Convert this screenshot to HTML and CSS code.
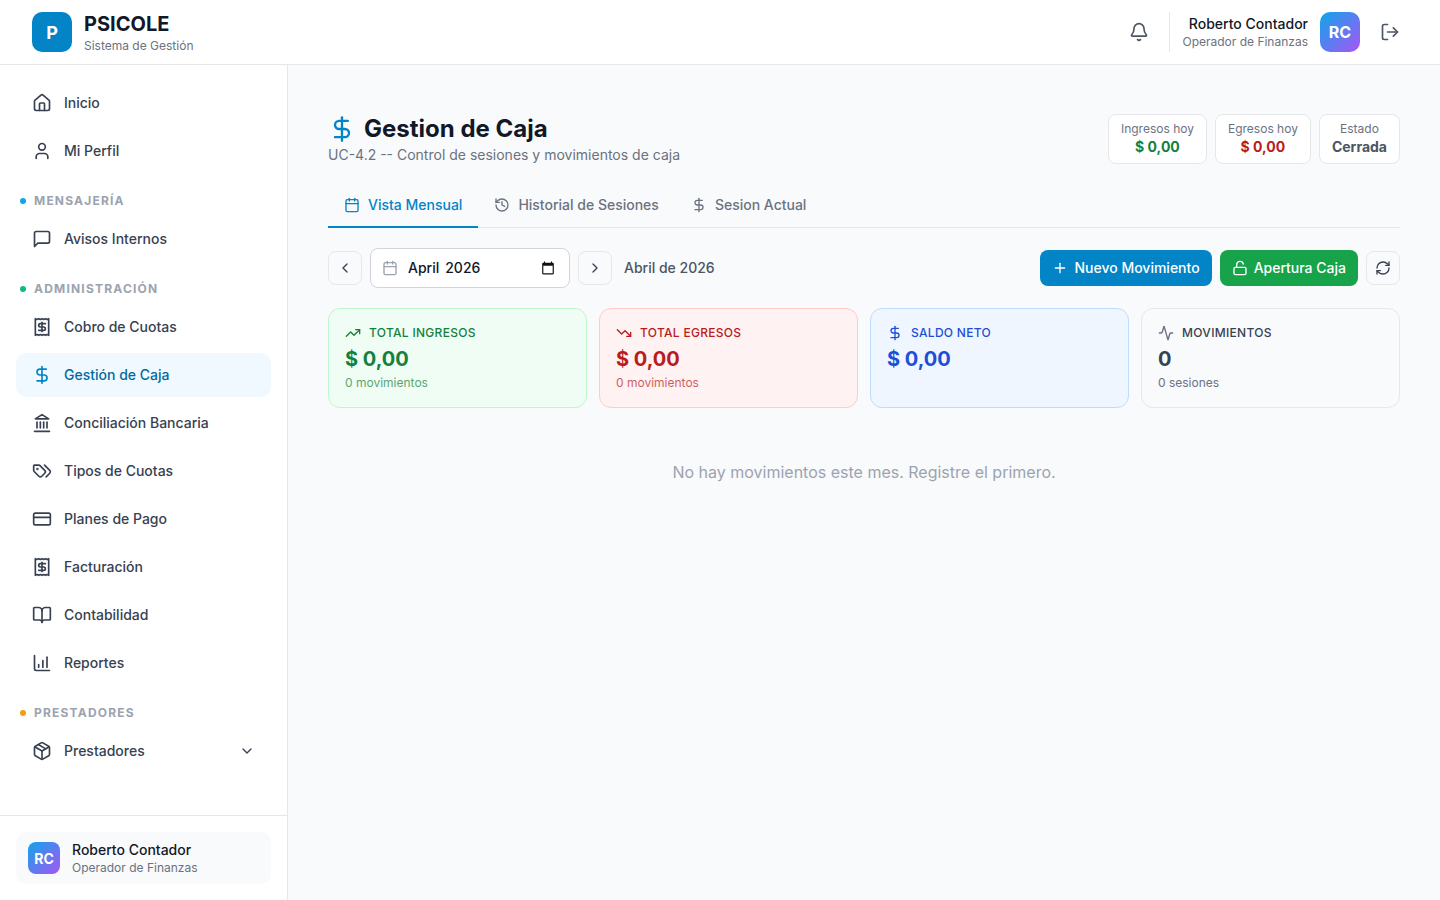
FILE: index.html
```html
<!DOCTYPE html>
<html lang="es">
  <head>
    <meta charset="UTF-8" />
    <meta name="viewport" content="width=device-width, initial-scale=1.0" />
    <title>PSICOLE - Gestion de Caja</title>
    <link rel="stylesheet" href="styles.css" />
  </head>
  <body>
    <svg class="icon-defs" width="0" height="0" aria-hidden="true">
      <defs>
        <symbol id="i-dollar" viewBox="0 0 24 24"><path d="M12 2v20"/><path d="M17 5H9.5a3.5 3.5 0 0 0 0 7h5a3.5 3.5 0 0 1 0 7H6"/></symbol>
        <symbol id="i-home" viewBox="0 0 24 24"><path d="M15 21v-8a1 1 0 0 0-1-1h-4a1 1 0 0 0-1 1v8"/><path d="M3 10a2 2 0 0 1 .709-1.528l7-5.999a2 2 0 0 1 2.582 0l7 5.999A2 2 0 0 1 21 10v9a2 2 0 0 1-2 2H5a2 2 0 0 1-2-2z"/></symbol>
        <symbol id="i-user" viewBox="0 0 24 24"><path d="M19 21v-2a4 4 0 0 0-4-4H9a4 4 0 0 0-4 4v2"/><circle cx="12" cy="7" r="4"/></symbol>
        <symbol id="i-chat" viewBox="0 0 24 24"><path d="M21 15a2 2 0 0 1-2 2H7l-4 4V5a2 2 0 0 1 2-2h14a2 2 0 0 1 2 2z"/></symbol>
        <symbol id="i-receipt" viewBox="0 0 24 24"><path d="M4 2v20l2-1 2 1 2-1 2 1 2-1 2 1 2-1 2 1V2l-2 1-2-1-2 1-2-1-2 1-2-1-2 1Z"/><path d="M16 8h-6a2 2 0 1 0 0 4h4a2 2 0 1 1 0 4H8"/><path d="M12 17.5v-11"/></symbol>
        <symbol id="i-bank" viewBox="0 0 24 24"><line x1="3" x2="21" y1="22" y2="22"/><line x1="6" x2="6" y1="18" y2="11"/><line x1="10" x2="10" y1="18" y2="11"/><line x1="14" x2="14" y1="18" y2="11"/><line x1="18" x2="18" y1="18" y2="11"/><polygon points="12 2 20 7 4 7"/></symbol>
        <symbol id="i-tags" viewBox="0 0 24 24"><path d="m15 5 6.3 6.3a2.4 2.4 0 0 1 0 3.4L17 19"/><path d="M9.586 5.586A2 2 0 0 0 8.172 5H3a1 1 0 0 0-1 1v5.172a2 2 0 0 0 .586 1.414L8.29 18.29a2.426 2.426 0 0 0 3.42 0l3.58-3.58a2.426 2.426 0 0 0 0-3.42z"/><circle cx="6.5" cy="9.5" r=".5" fill="currentColor"/></symbol>
        <symbol id="i-card" viewBox="0 0 24 24"><rect width="20" height="14" x="2" y="5" rx="2"/><line x1="2" x2="22" y1="10" y2="10"/></symbol>
        <symbol id="i-book" viewBox="0 0 24 24"><path d="M12 7v14"/><path d="M3 18a1 1 0 0 1-1-1V4a1 1 0 0 1 1-1h5a4 4 0 0 1 4 4 4 4 0 0 1 4-4h5a1 1 0 0 1 1 1v13a1 1 0 0 1-1 1h-6a3 3 0 0 0-3 3 3 3 0 0 0-3-3z"/></symbol>
        <symbol id="i-chart" viewBox="0 0 24 24"><path d="M3 3v16a2 2 0 0 0 2 2h16"/><path d="M8 17v-3"/><path d="M13 17V9"/><path d="M18 17V5"/></symbol>
        <symbol id="i-box" viewBox="0 0 24 24"><path d="M11 21.73a2 2 0 0 0 2 0l7-4A2 2 0 0 0 21 16V8a2 2 0 0 0-1-1.73l-7-4a2 2 0 0 0-2 0l-7 4A2 2 0 0 0 3 8v8a2 2 0 0 0 1 1.73z"/><path d="M12 22V12"/><path d="m3.3 7 8.7 5 8.7-5"/><path d="m7.5 4.27 9 5.15"/></symbol>
        <symbol id="i-calendar" viewBox="0 0 24 24"><path d="M8 2v4"/><path d="M16 2v4"/><rect width="18" height="18" x="3" y="4" rx="2"/><path d="M3 10h18"/></symbol>
      </defs>
    </svg>

    <header class="topbar">
      <div class="brand">
        <div class="brand-logo">P</div>
        <div class="brand-text">
          <div class="brand-name">PSICOLE</div>
          <div class="brand-sub">Sistema de Gestión</div>
        </div>
      </div>
      <div class="topbar-right">
        <svg class="icon icon-bell" viewBox="0 0 24 24"><path d="M10.268 21a2 2 0 0 0 3.464 0"/><path d="M3.262 15.326A1 1 0 0 0 4 17h16a1 1 0 0 0 .74-1.673C19.41 13.956 18 12.499 18 8A6 6 0 0 0 6 8c0 4.499-1.411 5.956-2.738 7.326"/></svg>
        <div class="topbar-divider"></div>
        <div class="topbar-user">
          <div class="topbar-user-name">Roberto Contador</div>
          <div class="topbar-user-role">Operador de Finanzas</div>
        </div>
        <div class="avatar avatar-lg">RC</div>
        <svg class="icon icon-logout" viewBox="0 0 24 24"><path d="M9 21H5a2 2 0 0 1-2-2V5a2 2 0 0 1 2-2h4"/><polyline points="16 17 21 12 16 7"/><line x1="21" x2="9" y1="12" y2="12"/></svg>
      </div>
    </header>

    <div class="layout">
      <aside class="sidebar">
        <nav class="nav">
          <a class="nav-item"><svg class="icon"><use href="#i-home"/></svg>Inicio</a>
          <a class="nav-item"><svg class="icon"><use href="#i-user"/></svg>Mi Perfil</a>

          <div class="nav-section dot-blue">MENSAJERÍA</div>
          <a class="nav-item"><svg class="icon"><use href="#i-chat"/></svg>Avisos Internos</a>

          <div class="nav-section dot-green">ADMINISTRACIÓN</div>
          <a class="nav-item"><svg class="icon"><use href="#i-receipt"/></svg>Cobro de Cuotas</a>
          <a class="nav-item active"><svg class="icon"><use href="#i-dollar"/></svg>Gestión de Caja</a>
          <a class="nav-item"><svg class="icon"><use href="#i-bank"/></svg>Conciliación Bancaria</a>
          <a class="nav-item"><svg class="icon"><use href="#i-tags"/></svg>Tipos de Cuotas</a>
          <a class="nav-item"><svg class="icon"><use href="#i-card"/></svg>Planes de Pago</a>
          <a class="nav-item"><svg class="icon"><use href="#i-receipt"/></svg>Facturación</a>
          <a class="nav-item"><svg class="icon"><use href="#i-book"/></svg>Contabilidad</a>
          <a class="nav-item"><svg class="icon"><use href="#i-chart"/></svg>Reportes</a>

          <div class="nav-section dot-orange">PRESTADORES</div>
          <a class="nav-item"><svg class="icon"><use href="#i-box"/></svg>Prestadores
            <svg class="icon icon-chevron" viewBox="0 0 24 24"><path d="m6 9 6 6 6-6"/></svg>
          </a>
        </nav>
        <div class="sidebar-footer">
          <div class="user-card">
            <div class="avatar">RC</div>
            <div>
              <div class="user-card-name">Roberto Contador</div>
              <div class="user-card-role">Operador de Finanzas</div>
            </div>
          </div>
        </div>
      </aside>

      <main class="main">
        <div class="page-head">
          <div class="page-head-text">
            <h1 class="page-title"><svg class="icon icon-title"><use href="#i-dollar"/></svg>Gestion de Caja</h1>
            <p class="page-sub">UC-4.2 -- Control de sesiones y movimientos de caja</p>
          </div>
          <div class="head-stats">
            <div class="head-stat">
              <div class="head-stat-label">Ingresos hoy</div>
              <div class="head-stat-value text-green">$ 0,00</div>
            </div>
            <div class="head-stat">
              <div class="head-stat-label">Egresos hoy</div>
              <div class="head-stat-value text-red">$ 0,00</div>
            </div>
            <div class="head-stat">
              <div class="head-stat-label">Estado</div>
              <div class="head-stat-value text-gray">Cerrada</div>
            </div>
          </div>
        </div>

        <div class="tabs">
          <a class="tab active"><svg class="icon"><use href="#i-calendar"/></svg>Vista Mensual</a>
          <a class="tab"><svg class="icon" viewBox="0 0 24 24"><path d="M3 12a9 9 0 1 0 9-9 9.75 9.75 0 0 0-6.74 2.74L3 8"/><path d="M3 3v5h5"/><path d="M12 7v5l4 2"/></svg>Historial de Sesiones</a>
          <a class="tab"><svg class="icon"><use href="#i-dollar"/></svg>Sesion Actual</a>
        </div>

        <div class="toolbar">
          <button class="btn-square"><svg class="icon" viewBox="0 0 24 24"><path d="m15 18-6-6 6-6"/></svg></button>
          <div class="month-field">
            <svg class="icon month-icon"><use href="#i-calendar"/></svg>
            <span class="month-value">April</span>
            <span class="month-value">2026</span>
            <svg class="month-picker" viewBox="0 0 24 24"><path d="M20 3h-1V1h-2v2H7V1H5v2H4c-1.1 0-2 .9-2 2v16c0 1.1.9 2 2 2h16c1.1 0 2-.9 2-2V5c0-1.1-.9-2-2-2zm0 18H4V8h16v13z"/></svg>
          </div>
          <button class="btn-square"><svg class="icon" viewBox="0 0 24 24"><path d="m9 18 6-6-6-6"/></svg></button>
          <span class="month-label">Abril de 2026</span>
          <div class="toolbar-actions">
            <button class="btn btn-blue"><svg class="icon" viewBox="0 0 24 24"><path d="M5 12h14"/><path d="M12 5v14"/></svg>Nuevo Movimiento</button>
            <button class="btn btn-green"><svg class="icon" viewBox="0 0 24 24"><rect width="18" height="11" x="3" y="11" rx="2" ry="2"/><path d="M7 11V7a5 5 0 0 1 9.9-1"/></svg>Apertura Caja</button>
            <button class="btn-square"><svg class="icon" viewBox="0 0 24 24"><path d="M3 12a9 9 0 0 1 9-9 9.75 9.75 0 0 1 6.74 2.74L21 8"/><path d="M21 3v5h-5"/><path d="M21 12a9 9 0 0 1-9 9 9.75 9.75 0 0 1-6.74-2.74L3 16"/><path d="M8 16H3v5"/></svg></button>
          </div>
        </div>

        <div class="cards">
          <div class="card card-green">
            <div class="card-label"><svg class="icon" viewBox="0 0 24 24"><polyline points="22 7 13.5 15.5 8.5 10.5 2 17"/><polyline points="16 7 22 7 22 13"/></svg>TOTAL INGRESOS</div>
            <div class="card-value">$ 0,00</div>
            <div class="card-sub">0 movimientos</div>
          </div>
          <div class="card card-red">
            <div class="card-label"><svg class="icon" viewBox="0 0 24 24"><polyline points="22 17 13.5 8.5 8.5 13.5 2 7"/><polyline points="16 17 22 17 22 11"/></svg>TOTAL EGRESOS</div>
            <div class="card-value">$ 0,00</div>
            <div class="card-sub">0 movimientos</div>
          </div>
          <div class="card card-blue">
            <div class="card-label"><svg class="icon"><use href="#i-dollar"/></svg>SALDO NETO</div>
            <div class="card-value">$ 0,00</div>
          </div>
          <div class="card card-gray">
            <div class="card-label"><svg class="icon" viewBox="0 0 24 24"><path d="M22 12h-2.48a2 2 0 0 0-1.93 1.46l-2.35 8.36a.25.25 0 0 1-.48 0L9.24 2.18a.25.25 0 0 0-.48 0l-2.35 8.36A2 2 0 0 1 4.49 12H2"/></svg>MOVIMIENTOS</div>
            <div class="card-value">0</div>
            <div class="card-sub">0 sesiones</div>
          </div>
        </div>

        <p class="empty">No hay movimientos este mes. Registre el primero.</p>
      </main>
    </div>
  </body>
</html>
```

FILE: styles.css
```css
* {
  margin: 0;
  padding: 0;
  box-sizing: border-box;
}

body {
  font-family: Inter, "Liberation Sans", sans-serif;
  background-color: #f9fafb;
  color: #111827;
  height: 900px;
  overflow: hidden;
}

.icon-defs {
  position: absolute;
}

.icon {
  width: 20px;
  height: 20px;
  flex-shrink: 0;
  fill: none;
  stroke: currentColor;
  stroke-width: 2;
  stroke-linecap: round;
  stroke-linejoin: round;
}

/* Top bar */
.topbar {
  height: 65px;
  background-color: #fff;
  border-bottom: 1px solid #e5e7eb;
  padding: 0 40px 0 32px;
  display: flex;
  align-items: center;
  justify-content: space-between;
}

.brand {
  display: flex;
  align-items: center;
  gap: 12px;
}

.brand-logo {
  width: 40px;
  height: 40px;
  border-radius: 10px;
  background-color: #0284c7;
  color: #fff;
  font-size: 18px;
  font-weight: 700;
  display: flex;
  align-items: center;
  justify-content: center;
}

.brand-text {
  padding-top: 2px;
}

.brand-name {
  font-size: 20px;
  line-height: 24px;
  font-weight: 700;
  color: #111827;
}

.brand-sub {
  font-size: 12px;
  line-height: 16px;
  margin-top: 2px;
  color: #6b7280;
}

.topbar-right {
  display: flex;
  align-items: center;
}

.icon-bell {
  color: #4b5563;
  margin-right: 20px;
}

.topbar-divider {
  width: 1px;
  height: 40px;
  background-color: #e5e7eb;
  margin-right: 12px;
}

.topbar-user {
  text-align: right;
  margin-right: 12px;
}

.topbar-user-name {
  font-size: 14px;
  line-height: 20px;
  font-weight: 500;
  color: #111827;
}

.topbar-user-role {
  font-size: 12px;
  line-height: 16px;
  color: #6b7280;
}

.avatar {
  width: 32px;
  height: 32px;
  border-radius: 8px;
  background: linear-gradient(135deg, #0ea5e9, #a855f7);
  color: #fff;
  font-size: 14px;
  font-weight: 700;
  display: flex;
  align-items: center;
  justify-content: center;
}

.avatar-lg {
  width: 40px;
  height: 40px;
  border-radius: 10px;
  font-size: 16px;
}

.icon-logout {
  color: #4b5563;
  margin-left: 20px;
}

/* Sidebar */
.layout {
  display: flex;
  height: 835px;
}

.sidebar {
  width: 288px;
  background-color: #fff;
  border-right: 1px solid #e5e7eb;
  display: flex;
  flex-direction: column;
  justify-content: space-between;
}

.nav {
  padding: 16px 16px 0;
  display: flex;
  flex-direction: column;
  gap: 4px;
}

.nav-item {
  height: 44px;
  padding: 0 16px;
  border-radius: 10px;
  display: flex;
  align-items: center;
  gap: 12px;
  font-size: 14px;
  line-height: 20px;
  font-weight: 500;
  color: #374151;
}

.nav-item.active {
  background-color: #f0f9ff;
  color: #0369a1;
}

.nav-item.active .icon {
  color: #0284c7;
}

.nav-item .icon-chevron {
  width: 16px;
  height: 16px;
  margin-left: auto;
}

.nav-section {
  position: relative;
  height: 16px;
  margin-top: 16px;
  margin-bottom: 4px;
  padding-left: 18px;
  font-size: 12px;
  line-height: 16px;
  font-weight: 700;
  letter-spacing: 1.2px;
  color: #9ca3af;
}

.nav-section::before {
  content: "";
  position: absolute;
  left: 4px;
  top: 5px;
  width: 6px;
  height: 6px;
  border-radius: 50%;
}

.dot-blue::before {
  background-color: #0ea5e9;
}

.dot-green::before {
  background-color: #10b981;
}

.dot-orange::before {
  background-color: #f59e0b;
}

.sidebar-footer {
  border-top: 1px solid #e5e7eb;
  padding: 16px;
}

.user-card {
  height: 52px;
  padding: 0 12px;
  border-radius: 10px;
  background-color: #f9fafb;
  display: flex;
  align-items: center;
  gap: 12px;
}

.user-card-name {
  font-size: 14px;
  line-height: 20px;
  font-weight: 500;
  color: #111827;
}

.user-card-role {
  font-size: 12px;
  line-height: 16px;
  color: #6b7280;
}

/* Main */
.main {
  flex: 1;
  padding: 48px 40px 0;
}

.page-head {
  display: flex;
  justify-content: space-between;
  align-items: flex-start;
  margin-top: 1px;
}

.page-head-text {
  padding-top: 1px;
}

.page-title {
  display: flex;
  align-items: center;
  gap: 8px;
  font-size: 24px;
  line-height: 28px;
  font-weight: 700;
  color: #111827;
}

.icon-title {
  width: 28px;
  height: 28px;
  color: #0284c7;
}

.page-sub {
  margin-top: 2px;
  font-size: 14px;
  line-height: 20px;
  color: #6b7280;
}

.head-stats {
  display: flex;
  gap: 8px;
}

.head-stat {
  height: 50px;
  padding: 0 12px;
  background-color: #fff;
  border: 1px solid #e5e7eb;
  border-radius: 8px;
  text-align: center;
  display: flex;
  flex-direction: column;
  justify-content: center;
}

.head-stat-label {
  font-size: 12px;
  line-height: 16px;
  color: #6b7280;
}

.head-stat-value {
  font-size: 14px;
  line-height: 20px;
  font-weight: 700;
}

.text-green {
  color: #15803d;
}

.text-red {
  color: #b91c1c;
}

.text-gray {
  color: #4b5563;
}

/* Tabs */
.tabs {
  margin-top: 19px;
  display: flex;
  border-bottom: 1px solid #e5e7eb;
}

.tab {
  height: 44px;
  padding: 0 16px;
  margin-bottom: -1px;
  display: flex;
  align-items: center;
  gap: 8px;
  font-size: 14px;
  line-height: 20px;
  font-weight: 500;
  color: #6b7280;
  border-bottom: 2px solid transparent;
}

.tab .icon {
  width: 16px;
  height: 16px;
}

.tab.active {
  color: #0284c7;
  border-bottom-color: #0284c7;
}

/* Toolbar */
.toolbar {
  margin-top: 20px;
  display: flex;
  align-items: center;
  gap: 8px;
}

.btn-square {
  width: 34px;
  height: 34px;
  background-color: #f9fafb;
  border: 1px solid #e5e7eb;
  border-radius: 8px;
  color: #374151;
  display: flex;
  align-items: center;
  justify-content: center;
}

.btn-square .icon {
  width: 16px;
  height: 16px;
}

.month-field {
  width: 200px;
  height: 40px;
  padding: 0 14px 0 11px;
  background-color: #fff;
  border: 1px solid #d1d5db;
  border-radius: 8px;
  display: flex;
  align-items: center;
}

.month-icon {
  width: 16px;
  height: 16px;
  margin-right: 10px;
  color: #9ca3af;
}

.month-value {
  margin-right: 6px;
  font-size: 14px;
  line-height: 20px;
  font-weight: 500;
  color: #111827;
}

.month-picker {
  width: 14px;
  height: 14px;
  margin-left: auto;
  fill: #111;
}

.month-label {
  margin-left: 4px;
  font-size: 14px;
  line-height: 20px;
  font-weight: 500;
  color: #4b5563;
}

.toolbar-actions {
  margin-left: auto;
  display: flex;
  align-items: center;
  gap: 8px;
}

.btn {
  height: 36px;
  padding: 0 12px;
  border: none;
  border-radius: 8px;
  color: #fff;
  font-family: inherit;
  font-size: 14px;
  line-height: 20px;
  font-weight: 500;
  display: flex;
  align-items: center;
  gap: 6px;
}

.btn .icon {
  width: 16px;
  height: 16px;
}

.btn-blue {
  background-color: #0284c7;
}

.btn-green {
  background-color: #16a34a;
}

/* Cards */
.cards {
  margin-top: 20px;
  display: grid;
  grid-template-columns: repeat(4, 1fr);
  gap: 12px;
}

.card {
  height: 100px;
  padding: 16px;
  border: 1px solid;
  border-radius: 12px;
}

.card-label {
  display: flex;
  align-items: center;
  gap: 8px;
  font-size: 12px;
  line-height: 16px;
  font-weight: 500;
  letter-spacing: 0.3px;
}

.card-label .icon {
  width: 16px;
  height: 16px;
}

.card-value {
  margin-top: 4px;
  font-size: 20px;
  line-height: 28px;
  font-weight: 700;
}

.card-sub {
  margin-top: 2px;
  font-size: 12px;
  line-height: 16px;
  opacity: 0.7;
}

.card-green {
  background-color: #f0fdf4;
  border-color: #bbf7d0;
  color: #15803d;
}

.card-red {
  background-color: #fef2f2;
  border-color: #fecaca;
  color: #b91c1c;
}

.card-blue {
  background-color: #eff6ff;
  border-color: #bfdbfe;
  color: #1d4ed8;
}

.card-gray {
  background-color: #f9fafb;
  border-color: #e5e7eb;
  color: #374151;
}

.card-gray .card-label .icon {
  color: #6b7280;
}

.card-gray .card-sub {
  color: #6b7280;
  opacity: 1;
}

.empty {
  margin-top: 54px;
  text-align: center;
  font-size: 16px;
  line-height: 20px;
  color: #9ca3af;
}
```
